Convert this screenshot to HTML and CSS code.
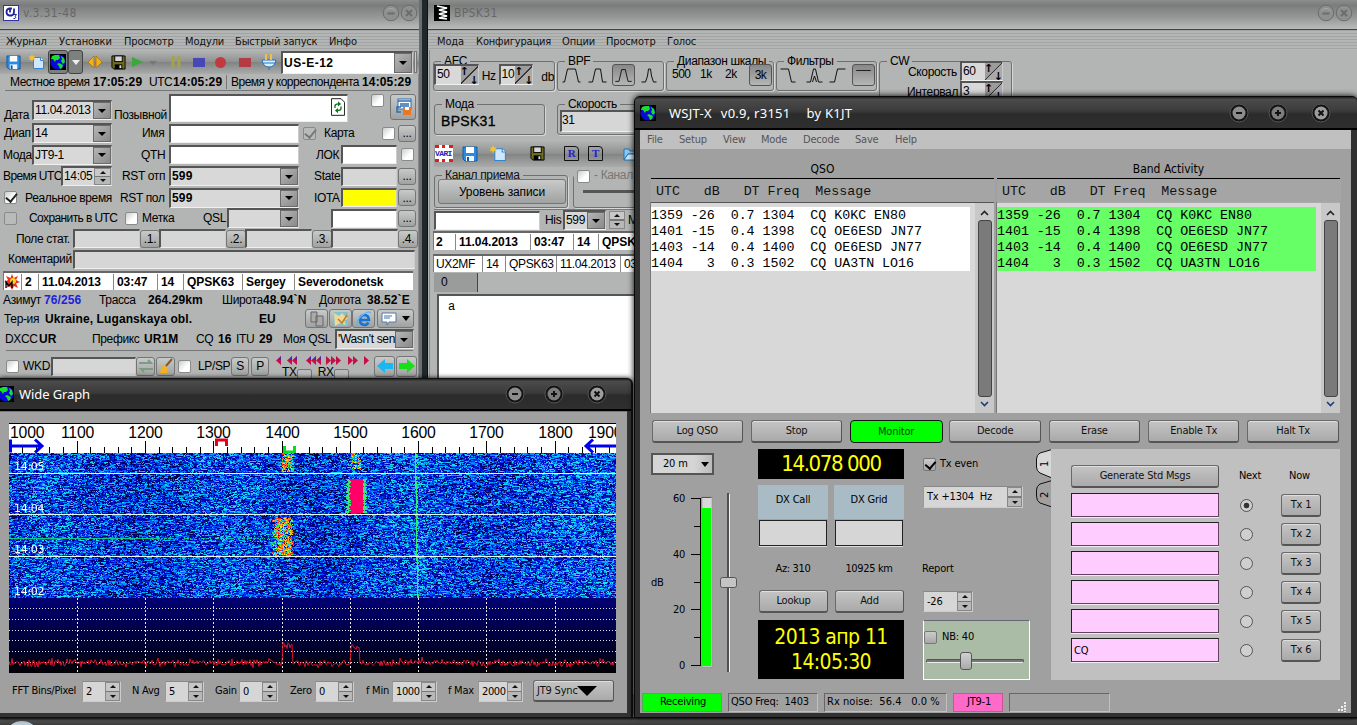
FILE: index.html
```html
<!DOCTYPE html>
<html lang="ru">
<head>
<meta charset="utf-8">
<title>WSJT-X</title>
<link rel="stylesheet" href="styles.css">
</head>
<body>
<svg class="defs" width="0" height="0">
  <symbol id="globe" viewBox="0 0 16 16"><rect width="16" height="16" fill="#000"/><circle cx="8" cy="8" r="7.6" fill="#0a0ad8"/><path d="M2 2l3-1 4 0 1 3-2 2-2 0-1 2-2-3-2 0zM11 2l3 2 1 4-2 2-2-3 1-2zM9 9l4 2-1 3-2 1-1-3-2-2z" fill="#18e028"/></symbol>
  <symbol id="floppy" viewBox="0 0 16 16"><path d="M1 1h14v14H3l-2-2z" fill="#2a8be0" stroke="#135a9c"/><rect x="4" y="1" width="8" height="6" fill="#fff"/><rect x="4" y="10" width="8" height="5" fill="#eef6ff"/><rect x="5" y="11" width="2" height="4" fill="#135a9c"/></symbol>
  <symbol id="floppyk" viewBox="0 0 16 16"><path d="M1 1h14v14H3l-2-2z" fill="#6d6d1e" stroke="#000"/><rect x="4" y="1" width="8" height="6" fill="#d8d8d8" stroke="#000"/><rect x="4" y="10" width="8" height="5" fill="#000"/><rect x="9" y="11" width="2" height="3" fill="#ddd"/></symbol>
  <symbol id="newdoc" viewBox="0 0 16 16"><path d="M4.500 3.500h7l3 3v8h-10z" fill="#cfe8ff" stroke="#3585cc"/><path d="M11.500 3.500v3h3" fill="#fff" stroke="#3585cc"/><path d="M3 0l1 2.500 2.500-.5-1.500 2 1.500 2-2.500-.5L3 8 2 5.500-.5 6 1 4-.5 2 2 2.500z" fill="#f2c530"/></symbol>
  <symbol id="minus" viewBox="0 0 20 20"><circle cx="10" cy="10" r="9" fill="#141414" stroke="#555"/><circle cx="10" cy="10" r="6.500" fill="#8d8d8d"/><path d="M7 10h6" stroke="#111" stroke-width="2"/></symbol>
  <symbol id="plus" viewBox="0 0 20 20"><circle cx="10" cy="10" r="9" fill="#141414" stroke="#555"/><circle cx="10" cy="10" r="6.500" fill="#7d7d7d"/><path d="M7 10h6M10 7v6" stroke="#111" stroke-width="2"/></symbol>
  <symbol id="close" viewBox="0 0 20 20"><circle cx="10" cy="10" r="9" fill="#141414" stroke="#555"/><circle cx="10" cy="10" r="6.500" fill="#9d9d9d"/><path d="M7.500 7.500l5 5M12.500 7.500l-5 5" stroke="#111" stroke-width="2"/></symbol>
  <symbol id="dimmin" viewBox="0 0 18 18"><circle cx="9" cy="9" r="7.800" fill="#8f8f8f" stroke="#6c6c6c"/><path d="M4.500 6.500Q9 2.500 13.500 6.500" fill="none" stroke="#aaa"/><path d="M5.500 9.500h7" fill="none" stroke="#6c6c6c" stroke-width="2"/></symbol>
  <symbol id="dimclose" viewBox="0 0 18 18"><circle cx="9" cy="9" r="7.800" fill="#8f8f8f" stroke="#6c6c6c"/><path d="M6 6l6 6M12 6l-6 6" stroke="#6c6c6c" stroke-width="2"/></symbol>
</svg>

<!-- Logger window -->
<section class="win logger">
  <header class="grey-title"><svg class="i16" viewBox="0 0 16 16"><rect width="16" height="16" fill="#fff"/><rect x=".5" y=".5" width="15" height="15" fill="none" stroke="#33a"/><path d="M9 3.500H6.500Q3.500 4 3.500 7t3 3.500h2Q11 10 11 7V3.500M7 3.500v4" fill="none" stroke="#229" stroke-width="1.800"/><path d="M11 9.500h2.500l-1.500 2q2 .5 0 2h-1.500" fill="none" stroke="#229"/></svg><span>v.3.31-48</span><svg class="cap first"><use href="#dimmin"/></svg><svg class="cap"><use href="#dimclose"/></svg></header>
  <nav class="stripes menu-logger"><span>Журнал</span><span>Установки</span><span>Просмотр</span><span>Модули</span><span>Быстрый запуск</span><span>Инфо</span></nav>
  <div class="tools tools-logger">
    <svg class="i15"><use href="#floppy"/></svg>
    <svg class="i16"><use href="#newdoc"/></svg>
    <span class="pressed"><svg class="i16"><use href="#globe"/></svg></span>
    <span class="pressed slim"><i class="tri pale"></i></span>
    <svg class="i16" viewBox="0 0 16 16"><path d="M7 2v12L1 8zM9 2v12l6-6z" fill="#f0b020" stroke="#a86c00" stroke-width=".7"/></svg>
    <svg class="i15"><use href="#floppyk"/></svg>
    <svg class="play" viewBox="0 0 26 14"><path d="M1 2l11 5-11 5z" fill="#3aa83a"/><path d="M18 6h8l-4 4z" fill="#777"/></svg>
    <svg class="i16" viewBox="0 0 16 16"><path d="M5 2v12M11 2v12" stroke="#a3a34a" stroke-width="3"/></svg>
    <i class="stopb blue"></i><i class="rec"></i><i class="stopb red"></i>
    <svg class="i16" viewBox="0 0 16 16"><path d="M1 6h14q-1 7-7 7T1 6z" fill="#d8efff" stroke="#2a70b8"/><path d="M5 0v6M10 0v6" stroke="#f0c040" stroke-width="2"/><path d="M8 13v3M2 9h12" stroke="#2a70b8"/></svg>
    <div class="combo site"><b>US-E-12</b><i class="dd"></i></div><i class="grip"></i>
  </div>
  <div class="times"><span>Местное время</span><b>17:05:29</b><span>UTC</span><b>14:05:29</b><span class="bar">Время у корреспондента</span><b>14:05:29</b></div>
  <div class="r ra"><span class="low">Дата</span><div class="combo w80 mt"><span>11.04.2013</span><i class="dd"></i></div><span class="low">Позывной</span>
    <div class="field call"><svg class="refresh" viewBox="0 0 16 20"><path d="M.5.500h11l4 4v15H.5z" fill="#fff" stroke="#000"/><path d="M4.500 11V9q0-2.500 4-2.500M11.500 9.500v2q0 2.500-4 2.500" fill="none" stroke="#11751c" stroke-width="1.500"/><path d="M8 3.500l3.500 3L8 9.500zM8 11l-3.500 3L8 17z" fill="#11751c"/></svg></div>
    <i class="chk"></i><span class="btn save"><svg viewBox="0 0 18 18"><rect x="4" y="1" width="13" height="10" fill="#fff" stroke="#2a6fb0"/><path d="M4 3h13M6 6h9M6 8h9" stroke="#2a6fb0" stroke-width="1.500"/><rect x="9" y="9" width="8" height="8" fill="#e87828"/><rect x="11" y="9" width="4" height="3" fill="#fff"/><path d="M7 9H3v5h4" fill="none" stroke="#2a6fb0" stroke-width="1.500"/></svg></span></div>
  <div class="r rb"><span>Диап</span><div class="combo w80"><span>14</span><i class="dd"></i></div><span>Имя</span><i class="field w130"></i><i class="chk off on"></i><span>Карта</span><i class="chk"></i><span class="btn dots">...</span></div>
  <div class="r rc"><span>Мода</span><div class="combo w80"><span>JT9-1</span><i class="dd"></i></div><span>QTH</span><i class="field w130"></i><span>ЛОК</span><i class="field w56"></i><i class="chk"></i></div>
  <div class="r rd"><span class="tight">Время UTC</span><div class="combo w51"><span>14:05</span><i class="ud"></i></div><span>RST отп</span><div class="combo w130"><b>599</b><i class="dd"></i></div><span>State</span><i class="field w56 grey"></i><span class="btn dots">...</span></div>
  <div class="r re"><i class="chk on"></i><span>Реальное время</span><span>RST пол</span><div class="combo w130"><b>599</b><i class="dd"></i></div><span>IOTA</span><i class="field w56 yellow"></i><span class="btn dots">...</span></div>
  <div class="r rf"><i class="chk off"></i><span class="tight">Сохранить в UTC</span><i class="chk"></i><span>Метка</span><span>QSL</span><div class="combo w71"><i class="dd"></i></div><i class="field w65"></i><span class="btn dots">...</span></div>
  <div class="r rg"><span>Поле стат.</span><i class="field grey w66"></i><span class="btn num">.1.</span><i class="field grey w66"></i><span class="btn num">.2.</span><i class="field grey w66"></i><span class="btn num">.3.</span><i class="field grey w66"></i><span class="btn num">.4.</span></div>
  <div class="r rh"><span>Коментарий</span><i class="field grey w341"></i></div>
  <div class="logline ll1"><svg class="i16" viewBox="0 0 16 16"><path d="M8 0l1.500 4L14 2l-2 4 4 2-4 1.500 2 4.500-4-2-2 4-2-4-4 2 2-4.500L0 8l4-2-2-4 4.500 2z" fill="#e8301c"/><circle cx="9" cy="7" r="3" fill="#ffd21e"/><path d="M2 14V8l3 4 3-4v6" fill="none" stroke="#000" stroke-width="1.300"/></svg><b>2</b><b>11.04.2013</b><b>03:47</b><b>14</b><b>QPSK63</b><b>Sergey</b><b>Severodonetsk</b></div>
  <div class="r ri"><span>Азимут</span><b class="azb">76/256</b><span>Трасса</span><b>264.29km</b><span>Широта</span><b>48.94`N</b><span>Долгота</span><b>38.52`E</b></div>
  <div class="r rj"><span>Тер-ия</span><b>Ukraine, Luganskaya obl.</b><b>EU</b>
    <span class="btn ib"><svg viewBox="0 0 16 16"><path d="M2 1h6v10H2zM7 5h7v10H7z" fill="#aaa" stroke="#666"/></svg></span>
    <span class="btn ib"><svg viewBox="0 0 16 16"><path d="M1 1h14v14H1z" fill="#7fc4cc"/><path d="M1 2l5 3 3-3 6 6-4 1 2 5-6-2-5 3z" fill="#eed99a"/><path d="M5 8l4 4 5-8" fill="none" stroke="#c77c23" stroke-width="1.500"/></svg></span>
    <span class="btn ib"><svg viewBox="0 0 16 16"><path d="M12.500 11.500Q11 14 8.500 14 4 13.500 4 9t4.500-5q4 0 4.500 5H5" fill="none" stroke="#1674d8" stroke-width="2.600"/><path d="M2 15Q-1 10 6 4.500T15 2" fill="none" stroke="#5fb5f5" stroke-width="1.500"/></svg></span>
    <span class="btn ib mail"><svg viewBox="0 0 16 16"><path d="M1 2h14v9H8l-2 3v-3H1z" fill="#fff" stroke="#5577aa"/><path d="M3 5h8M3 7h6" stroke="#47a"/></svg><i class="tri"></i></span></div>
  <div class="r rk"><span>DXCC</span><b>UR</b><span>Префикс</span><b>UR1M</b><span>CQ</span><b>16</b><span>ITU</span><b>29</b><span>Моя QSL</span><div class="combo w79"><span>'Wasn't senl</span><i class="dd"></i></div></div>
  <div class="r rl"><i class="chk"></i><span>WKD</span><i class="field grey w85"></i><span class="btn sq"><svg viewBox="0 0 16 16"><path d="M1 5h12l-3-3M15 11H3l3 3" fill="none" stroke="#7d9a83" stroke-width="2"/></svg></span><span class="btn sq"><svg viewBox="0 0 16 16"><path d="M14 1L8 8" stroke="#8a5a1c" stroke-width="2"/><path d="M4 7l6 3-1 5H2z" fill="#f2b21e"/></svg></span><i class="chk"></i><span>LP/SP</span><span class="btn sp">S</span><span class="btn sp">P</span>
    <div class="scan"><svg width="94" height="9" viewBox="0 0 94 9"><path d="M6 0v9L1 4.500zM17 0v9l-5-4.500zM22 0v9l-5-4.500zM36 0v9l-5-4.500zM41 0v9l-5-4.500zM46 0v9l-5-4.500zM51 0v9l5-4.500zM56 0v9l5-4.500zM61 0v9l5-4.500zM73 0v9l5-4.500zM78 0v9l5-4.500zM89 0v9l5-4.500z" fill="#c31048"/><path d="M6 0v4H3zM17 0v4h-3zM22 0v4h-3zM36 0v4h-3zM41 0v4h-3zM46 0v4h-3z" fill="#3030c8"/></svg><div class="txrx"><span>TX</span><i></i><span>RX</span><i></i></div></div>
    <span class="btn arrow"><svg viewBox="0 0 18 16"><path d="M9 1v4h8v6H9v4L1 8z" fill="#18b8f0"/></svg></span><span class="btn arrow"><svg viewBox="0 0 18 16"><path d="M9 1v4H1v6h8v4l8-7z" fill="#18e018"/></svg></span></div>
</section>

<!-- Digital modem window -->
<section class="win modem">
  <header class="grey-title"><svg class="i16" viewBox="0 0 16 16"><rect width="16" height="16" fill="#000"/><path d="M3 1l10 2-8 2 8 2-8 2 8 2-8 2 8 1" fill="none" stroke="#fff" stroke-width="1.600"/></svg><span>BPSK31</span><svg class="cap first"><use href="#dimmin"/></svg><svg class="cap"><use href="#dimclose"/></svg></header>
  <nav class="stripes menu-modem"><span>Мода</span><span>Конфигурация</span><span>Опции</span><span>Просмотр</span><span>Голос</span></nav>
  <div class="modem-body">
    <div class="groups">
      <fieldset><legend>AFC</legend><div class="afc"><div class="combo w45"><span>50</span><i class="diag"></i></div><span class="lab">Hz</span><div class="combo w35"><span>10</span><i class="diag"></i></div><span class="lab2">db</span></div></fieldset>
      <fieldset><legend>BPF</legend><div class="shapes"><svg viewBox="0 0 22 22"><path d="M2 18h2l3-13h8l3 13h2"/></svg><svg viewBox="0 0 22 22"><path d="M2 18h4l3-13h5l2 13h4"/></svg><svg class="sel" viewBox="0 0 22 22"><path d="M2 18h4l3-13h4l3 13h4"/></svg><svg viewBox="0 0 22 22"><path d="M3 18h4l2-6 1-7h2l1 7 2 6h3"/></svg></div></fieldset>
      <fieldset><legend>Диапазон шкалы</legend><div class="scale"><span>500</span><span>1k</span><span>2k</span><span class="sel">3k</span></div></fieldset>
      <fieldset><legend>Фильтры</legend><div class="shapes"><svg viewBox="0 0 22 22"><path d="M2 5h8l3 13h4"/></svg><svg viewBox="0 0 22 22"><path d="M3 18h4l3-13h2l3 13h4M9 18l2-6 2 6"/></svg><svg viewBox="0 0 22 22"><path d="M2 18h5l3-13h8"/></svg><svg class="sel" viewBox="0 0 22 22"><path d="M3 6h16"/></svg></div></fieldset>
      <fieldset class="tall"><legend>CW</legend><div class="cw"><span>Скорость</span><div class="combo w43"><span>60</span><i class="diag"></i></div><span>Интервал</span><div class="combo w43"><span>3</span><i class="diag"></i></div></div></fieldset>
    </div>
    <div class="groups2"><fieldset><legend>Мода</legend><span class="mode">BPSK31</span></fieldset><fieldset><legend>Скорость</legend><div class="field grey speed">31</div></fieldset></div>
    <div class="tools tools-modem"><span class="vari">VARI</span><svg class="i16"><use href="#floppy"/></svg><svg class="i17"><use href="#newdoc"/></svg><svg class="i15"><use href="#floppyk"/></svg><span class="rt">R</span><span class="rt">T</span><svg class="i16" viewBox="0 0 16 16"><path d="M1 14V3h5l1 2h7v3H5z" fill="#8cc8f0" stroke="#2272b0"/><path d="M1 14l4-6h11l-3 6z" fill="#cfe9fb" stroke="#2272b0"/></svg></div>
    <div class="groups3"><fieldset><legend>Канал приема</legend><span class="btn rec-level">Уровень записи</span></fieldset><fieldset class="tx"><legend><i class="chk"></i>- Канал</legend><i class="rail"></i></fieldset></div>
    <div class="his"><i class="field w106"></i><span>His</span><div class="combo w43"><span>599</span><i class="dd"></i></div><i class="ud"></i><span>My</span></div>
    <div class="logline ll2"><b>2</b><b>11.04.2013</b><b>03:47</b><b>14</b><b>QPSK63</b></div>
    <div class="logline ll3"><span>UX2MF</span><span>14</span><span>QPSK63</span><span>11.04.2013</span><span>03:47</span></div>
    <div class="tab0">0</div>
    <div class="rxtext">a</div>
  </div>
</section>

<!-- Task bar peeking out below the windows -->
<footer class="taskbar"><i class="orb"></i></footer>

<!-- Wide graph window -->
<section class="win wide">
  <header class="dark-title"><svg class="i16"><use href="#globe"/></svg><span>Wide Graph</span><svg class="b"><use href="#minus"/></svg><svg class="b"><use href="#plus"/></svg><svg class="b"><use href="#close"/></svg></header>
  <div class="wide-body">
    <div class="plot">
      <svg id="axis" width="607" height="30"></svg>
      <canvas id="fall" width="607" height="145"></canvas>
      <svg id="spec" width="607" height="75"></svg>
      <div class="stamps"><span>14:05</span><span>14:04</span><span>14:03</span><span>14:02</span></div>
    </div>
    <div class="wide-ctl"><span>FFT Bins/Pixel</span><div class="spin">2<i class="ud"></i></div><span>N Avg</span><div class="spin">5<i class="ud"></i></div><span>Gain</span><div class="spin">0<i class="ud"></i></div><span>Zero</span><div class="spin">0<i class="ud"></i></div><span>f Min</span><div class="spin big">1000<i class="ud"></i></div><span>f Max</span><div class="spin big">2000<i class="ud"></i></div><div class="qbtn sync">JT9 Sync<i></i></div></div>
  </div>
</section>

<!-- WSJT-X main window -->
<section class="win wsjt">
  <header class="dark-title"><svg class="i16"><use href="#globe"/></svg><span class="t1">WSJT-X</span><span class="t2">v0.9, r3151</span><span class="t3">by K1JT</span><svg class="b"><use href="#minus"/></svg><svg class="b"><use href="#plus"/></svg><svg class="b"><use href="#close"/></svg></header>
  <div class="wsjt-body">
    <nav class="menu-wsjt"><span>File</span><span>Setup</span><span>View</span><span>Mode</span><span>Decode</span><span>Save</span><span>Help</span></nav>
    <div class="panes">
      <div class="pane"><h3>QSO</h3><pre class="head">UTC   dB   DT Freq  Message</pre><div class="list"><pre>1359 -26  0.7 1304  CQ K0KC EN80
1401 -15  0.4 1398  CQ OE6ESD JN77
1403 -14  0.4 1400  CQ OE6ESD JN77
1404   3  0.3 1502  CQ UA3TN LO16</pre><div class="scroll"><svg viewBox="0 0 9 6"><path d="M1 5l3.500-3.500L8 5"/></svg><i></i><svg class="dn" viewBox="0 0 9 6"><path d="M1 1l3.500 3.500L8 1"/></svg></div></div></div>
      <div class="pane"><h3>Band Activity</h3><pre class="head">UTC   dB   DT Freq  Message</pre><div class="list green"><pre>1359 -26  0.7 1304  CQ K0KC EN80
1401 -15  0.4 1398  CQ OE6ESD JN77
1403 -14  0.4 1400  CQ OE6ESD JN77
1404   3  0.3 1502  CQ UA3TN LO16</pre><div class="scroll"><svg viewBox="0 0 9 6"><path d="M1 5l3.500-3.500L8 5"/></svg><i></i><svg class="dn" viewBox="0 0 9 6"><path d="M1 1l3.500 3.500L8 1"/></svg></div></div></div>
    </div>
    <div class="buttons"><span class="qbtn">Log QSO</span><span class="qbtn">Stop</span><span class="qbtn mon">Monitor</span><span class="qbtn">Decode</span><span class="qbtn">Erase</span><span class="qbtn">Enable Tx</span><span class="qbtn">Halt Tx</span></div>
    <div class="lower">
      <div class="colA"><div class="band">20 m<i class="tri"></i></div>
        <svg class="meter" width="100" height="184" viewBox="651 491 100 184"><g stroke="#000" fill="none"><path d="M700.500 498v168M691 498.500h9M694 526.500h6M691 554.500h9M694 582.500h6M691 609.500h9M694 637.500h6M691 665.500h9"/></g><rect x="702" y="497" width="10" height="170" fill="#d8d8d8" stroke="#888" stroke-width=".5"/><rect x="702" y="508" width="9" height="158" fill="#00ff00"/><path d="M701.500 497.500h10" stroke="#555"/><path d="M728 493v179" stroke="#505050" stroke-width="2"/><path d="M729.500 494v178" stroke="#f0f0f0"/><rect x="720.500" y="577.500" width="16" height="10" rx="2" fill="#c4c4c4" stroke="#555"/><g class="scale-text"><text x="673" y="502">60</text><text x="673" y="558">40</text><text x="673" y="613">20</text><text x="679" y="669">0</text><text x="651" y="586">dB</text></g></svg></div>
      <div class="colB"><div class="lcd freq">14.078 000</div>
        <div class="dx"><div><label>DX Call</label><i></i></div><div><label>DX Grid</label><i></i></div></div>
        <div class="azkm"><span>Az: 310</span><span>10925 km</span></div>
        <div class="look"><span class="qbtn">Lookup</span><span class="qbtn">Add</span></div>
        <div class="lcd clock">2013 апр 11<br>14:05:30</div></div>
      <div class="colC"><div class="even"><i class="qchk on"></i>Tx even</div><div class="spin txf">Tx +1304&nbsp; Hz<i class="ud"></i></div><div class="rep">Report</div><div class="spin rpt">-26<i class="ud"></i></div>
        <div class="nb"><div><i class="qchk"></i>NB: 40</div><div class="nbs"><i></i></div></div></div>
      <svg class="tabs" width="16" height="60"><path d="M16 .5L4 4Q.5 6 .5 10v8q0 4 3.500 6l12 5" fill="#d8d8d8" stroke="#111"/><path d="M16 31.500L4 35Q.5 37 .5 41v6q0 5 3.500 7l12 4" fill="none" stroke="#111"/><g class="tab-text"><text transform="translate(12 18) rotate(-90)">1</text><text transform="translate(12 49) rotate(-90)">2</text></g></svg>
      <div class="msgs"><span class="qbtn">Generate Std Msgs</span><span>Next</span><span>Now</span>
        <i class="msg"></i><i class="radio on"></i><span class="qbtn">Tx 1</span>
        <i class="msg"></i><i class="radio"></i><span class="qbtn">Tx 2</span>
        <i class="msg"></i><i class="radio"></i><span class="qbtn">Tx 3</span>
        <i class="msg"></i><i class="radio"></i><span class="qbtn">Tx 4</span>
        <i class="msg"></i><i class="radio"></i><span class="qbtn">Tx 5</span>
        <span class="msg">CQ</span><i class="radio"></i><span class="qbtn">Tx 6</span></div>
    </div>
    <div class="status"><span class="rx">Receiving</span><span>QSO Freq:&nbsp; 1403</span><span>Rx noise:&nbsp; 56.4&nbsp;&nbsp; 0.0 %</span><span class="jt">JT9-1</span><span></span><svg width="10" height="10"><path d="M8 0v10M5 4v6M2 7v3" stroke="#eee" stroke-width="2" stroke-dasharray="2 1"/></svg></div>
  </div>
</section>
<script src="graph.js"></script>
</body>
</html>
```
FILE: styles.css
```css
*{box-sizing:border-box}
body{margin:0;width:1357px;height:725px;overflow:hidden;position:relative;background:#20282c;font:12px/14px "Liberation Sans",Arial,sans-serif;color:#000}
i{font-style:normal;display:block}
pre,h3,fieldset{margin:0;padding:0;border:0;min-width:0}
svg{display:block;flex:none}
.defs{position:absolute}
.win{position:absolute;overflow:hidden}
.i15{width:15px;height:15px}.i16{width:16px;height:16px}.i17{width:17px;height:17px}

/* grey windows */
.logger{left:0;top:0;width:422px;height:380px;background:#b2b5b3;border-right:3px solid #6c6e6d;box-shadow:inset -1px 0 #888;letter-spacing:-.35px}
.logger b{letter-spacing:.1px}
.logger .logline b,.logline b{letter-spacing:-.05px}
.logger .combo b{letter-spacing:.2px}
.tight{letter-spacing:-.6px}
.modem{left:427px;top:0;width:930px;height:719px;background:#b2b5b3;border-left:1px solid #111;letter-spacing:-.35px}
.grey-title{display:flex;height:30px;align-items:flex-start;padding:5px 0 0 3px;background:linear-gradient(#8c8e8d,#7b7d7c 18%,#969897 60%,#b9bbba);border-bottom:1px solid #444;color:#666;font:12px/16px "DejaVu Sans Condensed","DejaVu Sans",sans-serif;font-stretch:condensed;letter-spacing:.35px}
.grey-title span{margin-left:4px}
.grey-title .cap{width:18px;height:18px;margin-top:-1px;flex:none}
.grey-title .first{margin-left:auto}
.modem .grey-title{padding:5px 4px 0 6px}
.logger .grey-title{padding-right:1px}
.stripes{display:grid;height:20px;align-items:center;background:repeating-linear-gradient(#a2a4a3 0 1px,#b4b6b5 1px 3px);font:11px/20px "DejaVu Sans Condensed","DejaVu Sans",sans-serif;font-stretch:condensed;letter-spacing:-.15px;color:#111;white-space:nowrap;padding-top:2px}
.menu-logger{padding-left:6px;grid-template-columns:53px 65px 61px 50px 94px 40px}
.menu-modem{padding-left:9px;grid-template-columns:39px 86px 44px 61px 40px}
.tools{display:grid;align-items:center;background:linear-gradient(#b5b7b6,#8f9190 50%,#828483 52%,#aaacab)}
.tools-logger{height:24px;padding-left:6px;grid-template-columns:23px 19px 20px 19px 24px 20px 37px 25px 22px 24px 22px 20px 133px 6px}
.pressed{display:grid;place-items:center;width:20px;height:24px;border:1px solid #444;border-radius:3px;background:#7e807f}
.pressed.slim{width:15px}
.tri{width:0;height:0;border:4px solid transparent;border-top:5px solid #000;border-bottom:0}
.tri.pale{border-top-color:#eee}
.play{width:26px;height:14px}
.stopb{width:12px;height:9px}.blue{background:#4747b5}.red{background:#b33c44}
.rec{width:11px;height:11px;border-radius:50%;background:#c23a40}
.grip{width:3px;height:22px;border:1px solid #777;background:#ccc}
.combo,.field{border:1px solid #f0f0f0;border-top:2px solid #555;border-left:2px solid #555;border-right-color:#ccc}
.combo{display:flex;background:#d8d8d8;height:20px;line-height:16px;padding-left:1px;white-space:nowrap;overflow:hidden;justify-content:space-between}
.combo>b,.combo>span{flex:1;min-width:0}
.field{background:#fff;height:19px;width:100%}
.site{width:132px;height:23px;background:#fff;line-height:20px}
.logger .site b{letter-spacing:.5px}
.dd{flex:none;width:18px;margin-left:auto;background:linear-gradient(135deg,#b5b5b5,#8a8a8a);border:1px solid #6a6a6a;position:relative}
.dd::after{content:"";position:absolute;left:4px;top:calc(50% - 2px);border:4px solid transparent;border-top:4px solid #000;border-bottom:0}
.ud{flex:none;width:17px;margin-left:auto;background:linear-gradient(#c8c8c8 45%,#777 45% 55%,#b8b8b8 55%);border:1px solid #888;position:relative}
.ud::before,.ud::after{content:"";position:absolute;left:calc(50% - 3px);border:3px solid transparent}
.ud::before{top:2px;border-top:0;border-bottom:3px solid #111}
.ud::after{bottom:2px;border-bottom:0;border-top:3px solid #111}
.diag{flex:none;width:17px;background:linear-gradient(135deg,#9c9c9c 47%,#333 48% 52%,#aaa 53%);position:relative}
.diag::before,.diag::after{position:absolute;font:bold 11px/9px "DejaVu Sans",sans-serif;letter-spacing:0}
.diag::before{content:"↑";left:-1px;top:1px}.diag::after{content:"↓";right:-1px;bottom:-1px}
.grey{background:#d5d6d5}.yellow{background:#ff0}
.w35{width:35px}.w43{width:43px}.w45{width:45px}.w51{width:51px}.w56{width:56px}.w65{width:66px}.w66{width:67px}.w71{width:72px}.w79{width:79px}.w80{width:80px}.w85{width:85px}.w106{width:106px}.w130{width:130px}.w341{width:342px}
.times{display:grid;height:17px;margin:0 9px 0 5px;padding-left:5px;align-items:center;border-bottom:1px solid #777;grid-template-columns:83px 56px 24px 53px 136px 50px;white-space:nowrap;letter-spacing:-.5px}
.logger .times b{letter-spacing:.15px}
.bar{border-left:1px solid #777;padding-left:4px}
.r{display:grid;align-items:center;white-space:nowrap}
.chk{width:13px;height:13px;border:1px solid #8a8a8a;background:linear-gradient(135deg,#ccc,#fff 60%);border-radius:2px;position:relative}
.chk.off{background:#b9bab9}
.chk.on::after{content:"";position:absolute;left:3px;top:-1px;width:5px;height:9px;border:solid #222;border-width:0 2px 2px 0;transform:rotate(40deg)}
.chk.off.on::after{border-color:#777}
.btn{display:grid;place-items:center;border:1px solid #747675;border-radius:3px;background:linear-gradient(#c8cac9,#a0a2a1)}
.dots{width:18px;height:17px;line-height:10px}
.num{width:20px;height:18px}
.ra{height:28px;margin-top:3px;padding-left:4px;align-items:start;grid-template-columns:28px 82px 55px 202px 19px 26px}
.ra .low{padding-top:14px}.mt{margin-top:6px}
.call{width:179px;height:28px;display:flex;justify-content:flex-end;padding:2px 2px 0 0}
.refresh{width:14px;height:18px}
.save{width:26px;height:26px}.save svg{width:18px;height:18px}
.rb{height:22px;padding-left:4px;grid-template-columns:28px 110px 27px 134px 21px 58px 16px 18px}
.rc{height:21px;padding-left:3px;grid-template-columns:29px 109px 28px 147px 25px 60px 14px}
.rd{height:22px;padding-left:3px;grid-template-columns:58px 61px 47px 145px 27px 57px 18px}
.re{height:21px;padding-left:4px;grid-template-columns:21px 95px 49px 145px 27px 57px 18px}
.rf{height:20px;padding-left:4px;grid-template-columns:25px 96px 17px 61px 24px 104px 67px 18px}
.rg{height:21px;padding-left:16px;grid-template-columns:57px 67px 19px 67px 19px 67px 19px 67px 19px}
.rh{height:20px;padding-left:8px;grid-template-columns:65px 342px}
.logline{display:grid;align-items:center;background:#fff;border-top:2px solid #666;border-left:1px solid #777;height:19px;line-height:16px;white-space:nowrap;overflow:hidden}
.logline>:not(:first-child){border-left:1px solid #888;padding-left:3px}
.ll1{margin:2px 6px 0 3px;grid-template-columns:17px 17px 75px 44px 26px 59px 52px 1fr}
.ri{height:18px;margin-top:1px;padding-left:3px;grid-template-columns:41px 55px 49px 74px 41px 56px 48px 50px}
.azb{color:#2222dd}
.rj{height:19px;padding-left:4px;grid-template-columns:41px 214px 46px 24px 23px 25px 38px}
.ib{width:23px;height:19px}.ib svg{width:16px;height:16px}
.mail{width:37px;display:flex;justify-content:center;gap:5px}
.rk{height:22px;padding-left:5px;grid-template-columns:34px 53px 52px 52px 22px 18px 23px 24px 52px 79px}
.rk .combo{height:20px}
.rk .combo span{overflow:hidden}
.rl{height:27px;margin:0 6px 0 6px;border-top:1px solid #777;grid-template-columns:17px 28px 85px 20px 22px 20px 33px 20px 24px 99px 22px 20px;padding-top:4px}
.sq{width:19px;height:19px}.sq svg{width:16px;height:16px}.sp{width:18px;height:19px}
.scan{align-self:start;height:22px;padding-top:1px}
.txrx{display:flex;margin-left:7px;line-height:13px;margin-top:1px}.txrx i{width:15px;height:10px;margin:3px 6px 0 0;border:1px solid #777;border-radius:2px;background:#bbb}
.arrow{width:21px;height:21px}.arrow svg{width:18px;height:16px}

.modem-body{padding:6px 0 0 4px;border-left:1px solid #888;margin-left:1px}
.modem fieldset{border:1px solid #6f7170;border-radius:3px;box-shadow:1px 1px #d6d8d7}
.modem legend{margin-left:7px;padding:0 3px;line-height:10px;height:10px;white-space:nowrap;float:none}
.groups{display:grid;grid-template-columns:122px 107px 108px 101px 133px;gap:2px;height:36px;margin-left:-1px}
.groups fieldset{height:35px}
.groups .tall{height:60px}
.afc{display:flex;align-items:center;gap:3px;margin:-2px 0 0 0}.afc .combo{height:21px}
.lab{padding-top:3px}.lab2{padding:5px 0 0 5px}
.shapes{display:flex;justify-content:space-around;margin-top:-2px}
.shapes svg{width:23px;height:22px;fill:none;stroke:#111}
.sel{border:1px solid #555;border-radius:3px;background:linear-gradient(#888,#b5b5b5)}
.scale{display:grid;grid-template-columns:28px 25px 24px 23px;padding-left:5px;line-height:20px;margin-top:-2px;letter-spacing:-.5px}.scale .sel{text-align:center}
.cw{display:grid;grid-template-columns:50px 43px;gap:0 3px;justify-content:end;padding-right:8px;margin-top:-5px;text-align:right}.cw .combo{text-align:left}
.cw span{padding-top:4px}
.cw .combo span{padding-top:0}
.groups2{display:grid;grid-template-columns:111px 240px;gap:12px;height:36px;margin-top:7px}
.groups2 fieldset{height:36px}
.mode{font-size:14px;line-height:24px;padding-left:6px;letter-spacing:.3px;-webkit-text-stroke:.3px #000}
.speed{margin:1px 2px;height:22px;line-height:17px}
.tools-modem{height:27px;margin-top:5px;grid-template-columns:27px 28px 40px 34px 24px 35px 20px;padding-left:1px}
.vari{font:bold 8px/12px "Liberation Mono",monospace;color:#22b;background:#fff;border:dotted #e21b1b;border-width:3px 0;width:18px;height:17px;letter-spacing:-.6px}
.rt{width:15px;height:15px;border:1px solid #111;border-radius:0 4px 0 0;font:bold 11px/13px "Liberation Serif",serif;color:#22c;text-align:center}
.groups3{display:grid;grid-template-columns:134px 300px;gap:5px;margin-top:3px;height:38px}
.rec-level{width:128px;height:25px;margin:-1px 0 0 3px;letter-spacing:-.1px}
.groups3 legend{display:flex;gap:4px;color:#111}.groups3 .tx legend{margin-left:0;color:#777}
.rail{margin:10px 0 0 9px;height:3px;background:#555}
.his{display:grid;grid-template-columns:111px 18px 46px 19px 20px;height:21px;align-items:center;margin-top:1px;border-top:1px solid #777}
.his .ud{width:16px;height:18px;margin:0}
.ll2,.ll3{width:300px;margin-left:-1px}
.ll2{margin-top:1px;grid-template-columns:19px 75px 43px 25px 1fr;padding-left:2px}
.ll3{margin-top:4px;height:18px;grid-template-columns:46px 23px 51px 64px 1fr;padding-left:2px}
.tab0{width:44px;height:19px;margin-top:1px;padding:2px 0 0 7px;background:#9a9c9b;border-right:1px solid #444}
.rxtext{height:400px;margin:2px 0 0 3px;background:#fff;border:solid #555;border-width:2px 0 0 2px;padding:3px 9px;font:12px/16px "Liberation Mono",monospace}

/* dark windows */
.dark-title{display:flex;align-items:center;height:32px;background:linear-gradient(#222,#4b4b4b 8%,#3b3b3b 45%,#2b2b2b 55%,#2f2f2f);border-bottom:2px solid #000;color:#fff;font:13px/16px "Noto Sans",sans-serif;white-space:nowrap;letter-spacing:-.1px}
.dark-title .b{width:20px;height:20px}
.wide,.wsjt,.qbtn,.spin{font:11px/14px "DejaVu Sans Condensed","DejaVu Sans",sans-serif;font-stretch:condensed;letter-spacing:-.2px}
.wide{left:-1px;top:378px;width:634px;height:340px;background:#333;border:1px solid #111;border-radius:0 6px 0 0;border-right-width:2px;box-shadow:0 0 5px #000}
.wide .dark-title{padding-right:24px}.wide .dark-title .i16{margin-left:-2px}.wide .dark-title span{margin:0 auto 0 5px}
.wide .b:nth-of-type(2){margin-right:19px}.wide .b:nth-of-type(3){margin-right:23px}
.wide-body{width:627px;height:302px;background:#a0a0a0;border-top:1px solid #777;padding:11px 0 0 9px}
.plot{width:607px;height:251px;border-top:1px solid #000;position:relative;overflow:hidden}
#axis{margin-top:-1px}
#fall{display:block}
.stamps{position:absolute;left:5px;top:36px;display:flex;flex-direction:column;color:#fff;font:11px/14px "DejaVu Sans",sans-serif;letter-spacing:-.3px;gap:27.500px}
.wide-ctl{display:grid;grid-template-columns:70px 50px 33px 50px 24px 51px 25px 51px 26px 56px 30px 55px 81px;padding:6px 0 0 3px;align-items:center;white-space:nowrap}
.wide-ctl span{letter-spacing:-.25px}
.spin{display:flex;height:21px;background:#d6d6d6;border:1px solid #ccc;border-top-color:#888;border-left-color:#999;padding-left:3px;line-height:19px;width:39px;white-space:nowrap}
.spin.big{width:45px;letter-spacing:-.4px}.spin .ud{width:15px}
.qbtn{display:flex;align-items:center;justify-content:center;border:1px solid #6a6a6a;border-right-color:#555;border-bottom:2px solid #555;border-radius:3px;background:linear-gradient(#c4c4c4,#aaa);box-shadow:inset 0 1px #dedede;white-space:nowrap;color:#111}
.sync{width:81px;height:22px;justify-content:flex-start;padding-left:3px}.sync i{border:10px solid transparent;border-top:10px solid #000;border-bottom:0;margin-left:-1px}

.wsjt{left:634px;top:96px;width:724px;height:622px;background:#303030;border:1px solid #080808;border-radius:6px 6px 0 0;box-shadow:0 0 6px #000}
.wsjt .dark-title{padding:0 26px 0 5px;height:33px;letter-spacing:.25px}
.t1{margin-left:13px}.t2{margin-left:9px}.t3{margin:0 auto 0 16px}
.wsjt .b:nth-of-type(2){margin-right:19px}.wsjt .b:nth-of-type(3){margin-right:23px}
.wsjt-body{margin-left:5px;width:711px;height:583px;background:#a0a0a0}
.menu-wsjt{display:grid;grid-template-columns:32px 44px 38px 42px 52px 40px 40px;padding-left:7px;height:19px;align-items:center;background:#c0c0c0;color:#555}
.panes{display:grid;grid-template-columns:344px 344px;gap:2px;padding:13px 0 0 11px}
.pane h3{font:12px/14px "DejaVu Sans Condensed","DejaVu Sans",sans-serif;font-stretch:condensed;text-align:center;height:17px;border-bottom:1px solid #000;margin-right:1px;letter-spacing:0}
.pane pre{font:13.333px/16px "Liberation Mono","Courier New",monospace;letter-spacing:-.03px}
.pane .head{height:23px;padding:5px 0 0 5px;background:#a5a5a5;color:#111}
.list{display:flex;justify-content:space-between;height:211px;margin-right:1px;background:#d8d8d8;border-top:1px solid #555;box-shadow:-1px 0 #777}
.list pre{width:319px;height:64px;margin-top:4px;background:#fff;padding-top:1px;overflow:visible}
.green{border-color:#aaa}.green pre{background:#66ff66}
.scroll{width:19px;background:#c8c8c8;display:flex;flex-direction:column;align-items:center;padding-top:7px}
.scroll svg{width:9px;height:6px;fill:none;stroke:#222;stroke-width:1.600}
.scroll i{width:14px;height:177px;background:#7a7a7a;border:1px solid #444;border-radius:3px;margin:4px 0 4px}
.scroll .dn{stroke:#1d3f78}
.buttons{display:grid;grid-template-columns:repeat(7,91px);column-gap:8.300px;margin:7px 0 0 12px}
.buttons .qbtn{height:23px;margin-left:-.5px}
.buttons .mon{background:#0f0;border:1px solid #111;box-shadow:none;color:#054405;width:93px;margin-left:-1px;border-radius:4px}
.lower{display:grid;grid-template-columns:107px 165px 113px 15px 289px;margin:6px 0 0 11px;height:231px;white-space:nowrap}
.band{display:flex;width:63px;height:22px;margin:4px 0 16px;border:2px solid #555;background:linear-gradient(90deg,#d5d5d5 70%,#bbb);align-items:center;justify-content:space-between;padding:0 3px 0 10px}
.colA{display:flow-root}
.scale-text{font:11px "DejaVu Sans Condensed","DejaVu Sans",sans-serif;font-stretch:condensed}
.tab-text{font:10px "DejaVu Sans",sans-serif}
.lcd{width:146px;background:#000;color:#ff0;text-align:center;font:22px/30px "DejaVu Sans Condensed","DejaVu Sans",sans-serif;font-stretch:condensed;letter-spacing:-1.400px}
.freq{height:30px}
.clock{height:59px;font-size:21px;line-height:25px;padding-top:5px;margin-top:7px;letter-spacing:-.6px}
.dx{display:grid;grid-template-columns:70px 70px;gap:6px;margin-top:6px}
.dx>div{height:61px}
.dx label{display:block;height:34px;background:#a9bcc5;text-align:center;line-height:30px}
.dx i{height:26px;margin:1px 1px 0;border:1px solid #222;background:#d6d6d6;box-shadow:0 1px #ddd}
.azkm{display:grid;grid-template-columns:70px 76px;gap:0 3px;text-align:center;margin-top:16px;letter-spacing:-.35px}
.look{display:grid;grid-template-columns:69px 69px;gap:7px;margin:14px 0 0 1px}.look .qbtn{height:23px}
.even{display:flex;align-items:center;gap:4px;height:14px;margin-top:8px}
.qchk{width:13px;height:13px;border:1px solid #777;border-radius:2px;background:linear-gradient(#ccc,#a8a8a8);position:relative}
.qchk.on::after{content:"";position:absolute;left:3px;top:0;width:5px;height:8px;border:solid #000;border-width:0 2px 2px 0;transform:rotate(40deg)}
.txf{width:100px;height:22px;margin-top:15px}
.rep{margin:54px 0 15px -1px}
.rpt{width:50px;height:21px}
.nb{width:107px;height:60px;margin-top:8px;background:#aabba6;border:1px solid #fff;border-top-color:#667}
.nb>div:first-child{display:flex;gap:5px;margin-top:9px;align-items:center}
.nbs{margin:15px 5px 0 2px;height:4px;border:1px solid #555;border-bottom-color:#eee;background:#777;border-radius:2px}
.nbs i{width:12px;height:18px;border:1px solid #555;border-radius:3px;background:linear-gradient(#d0d0d0,#aaa);margin:-8px 0 0 33px}
.msgs{display:grid;background:#c0c0c0;grid-template-columns:150px 46px 40px;grid-template-rows:24px repeat(6,24px);gap:5px 6px;padding:15px 0 0 20px;justify-items:center;align-items:center;align-content:start}
.msgs>:nth-child(3n+1){width:148px;justify-self:start}
.msgs .qbtn{height:23px}.msgs>.qbtn:nth-child(3n+3){width:40px;margin-left:4px}
.msgs>span:nth-child(3){margin-left:1px}
.msg{height:24px;background:#fcf;border:1px solid #644064;border-top-color:#222;border-left-color:#222;box-shadow:0 1px #eee;padding:5px 0 0 2px;line-height:14px}
.radio{width:13px;height:13px;border:1px solid #555;border-radius:50%;background:#cfcfcf;margin-right:7px}
.radio.on{background:radial-gradient(circle,#333 2.500px,#cfcfcf 3.200px)}
.tabs{overflow:visible}
.status{display:grid;grid-template-columns:80px 90px 123px 50px 101px 1fr;column-gap:6px;margin:13px 0 0 2px;height:19px;white-space:nowrap}
.status span{border:1px solid #666;border-right-color:#c0c0c0;border-bottom-color:#c0c0c0;padding-left:2px;line-height:16px}
.status span:nth-child(3){letter-spacing:.05px}
.status .rx{background:#0f0;border-color:#5a5;text-align:center}.status .jt{background:#ff69c8;text-align:center;border-color:#c59}
.status svg{margin:9px 4px 0 auto}

.taskbar{position:absolute;left:0;top:717px;width:1357px;height:8px;background:linear-gradient(#111,#555 40%,#3a3a3a);overflow:hidden}
.orb{width:28px;height:20px;border-radius:50%;background:#b8cbd6;margin:4px 0 0 8px}
```
FILE: graph.js
```
// Seeded generator keeps the noise identical between loads
let seed = 4711;
function rnd() {
  seed = (seed + 0x6D2B79F5) | 0;
  let t = Math.imul(seed ^ (seed >>> 15), 1 | seed);
  t = (t + Math.imul(t ^ (t >>> 7), 61 | t)) ^ t;
  return ((t ^ (t >>> 14)) >>> 0) / 4294967296;
}

// Frequency axis
const xs = [68.5, 136.5, 204.5, 273.5, 341.5, 409.5, 477.5, 546.5];
let axis = '<rect width="607" height="30" fill="#fff"/><g stroke="#000">';
for (let k = 1; k < 45; k++) {
  const x = Math.floor(k * 13.65) + 0.5;
  axis += `<path d="M${x} ${k % 5 ? 24 : 18}V30"/>`;
}
axis += '</g><g font-family="Liberation Sans,Arial,sans-serif" font-size="15.800"><text x="1" y="15">1000</text>';
xs.forEach((x, i) => { axis += `<text x="${x}" y="15" text-anchor="middle">${1100 + i * 100}</text>`; });
axis += '<text x="579" y="15">1900</text></g>';
axis += '<g fill="none" stroke="#0000f0" stroke-width="3"><path d="M1.500 16.500v13M1 23h32M26 16.500l7 6.500-7 6.500"/><path d="M607 23h-30M584 16.500l-7 6.500 7 6.500"/></g>';
axis += '<path d="M207.500 23v-6h10v6" fill="none" stroke="#e00020" stroke-width="3"/><path d="M275.500 23v6h10v-6" fill="none" stroke="#00e020" stroke-width="3"/>';
document.getElementById('axis').innerHTML = axis;

// Waterfall
const ctx = document.getElementById('fall').getContext('2d');
const img = ctx.createImageData(607, 145);
const stops = [[0, 0, 50], [0, 0, 150], [0, 25, 225], [0, 80, 255], [0, 150, 255], [30, 225, 245]];
const hot = [[255, 40, 30], [240, 230, 20], [70, 240, 60], [20, 200, 200], [250, 150, 20]];
for (let y = 0; y < 145; y++) {
  const edge = 3 * rnd();
  let prev = rnd();
  for (let x = 0; x < 607; x++) {
    const bias = 0.05 * Math.sin(x / 28) + (x > 400 ? 0.05 : 0.02);
    prev = rnd() < 0.35 ? prev : rnd();
    const v = Math.max(0, Math.min(0.999, Math.pow(prev, 1.1) + bias));
    const f = v * 5, n = Math.floor(f), t = f - n;
    let c = stops[n].map((a, i) => a + (stops[n + 1][i] - a) * t);
    if (y > 64 && y < 102 && x > 262 + edge * 2 && x < 284 - edge && rnd() < 0.8) c = hot[Math.floor(rnd() * 5)];
    if (y < 19 && x > 272 && x < 285 && rnd() < 0.65) c = hot[Math.floor(rnd() * 5)];
    if (y < 16 && x > 341 && x < 352 && rnd() < 0.55) c = hot[Math.floor(rnd() * 5)];
    if (y > 25 && y < 60) {
      if (x > 336 + edge && x < 358 - edge) c = [60, 230, 120];
      if (x > 339 + edge && x < 353 + edge / 2) c = [255, 0, 105];
    }
    if (y === 85 && (x < 150 || rnd() < 0.4) && x < 270) c = [20, 200, 130];
    if (y === 86 && x > 470 && rnd() < 0.8) c = [20, 190, 120];
    const carrier = 406 + Math.round(y / 72);
    if (x === carrier || (x === carrier + 1 && rnd() < 0.5)) c = [50, 240, 110];
    if (y === 20 || y === 61 || y === 103) c = [235, 250, 240];
    const o = (y * 607 + x) * 4;
    img.data[o] = c[0]; img.data[o + 1] = c[1]; img.data[o + 2] = c[2]; img.data[o + 3] = 255;
  }
}
ctx.putImageData(img, 0, 0);

// Averaged spectrum
let spec = '<defs><linearGradient id="navy" x2="0" y2="1"><stop stop-color="#000074"/><stop offset=".5" stop-color="#000040"/><stop offset="1" stop-color="#000005"/></linearGradient></defs><rect width="607" height="75" fill="url(#navy)"/><g stroke="#e8e8e8" stroke-dasharray="1 2">';
[10.5, 21.5, 32.5, 42.5, 53.5, 64.5].forEach(y => { spec += `<path d="M0 ${y}H607"/>`; });
xs.forEach(x => { spec += `<path d="M${x} 0V75" stroke-dasharray="2 2"/>`; });
let d = '';
for (let x = 0; x < 607; x++) {
  let y = 65 + (rnd() + rnd() + rnd() - 1.5) * 4;
  if (x > 273 && x < 284) y -= 18;
  if (x > 341 && x < 351) y -= 16;
  d += (x ? 'L' : 'M') + x + ' ' + y.toFixed(1);
}
spec += `</g><path d="${d}" fill="none" stroke="#d81525"/>`;
document.getElementById('spec').innerHTML = spec;
```
